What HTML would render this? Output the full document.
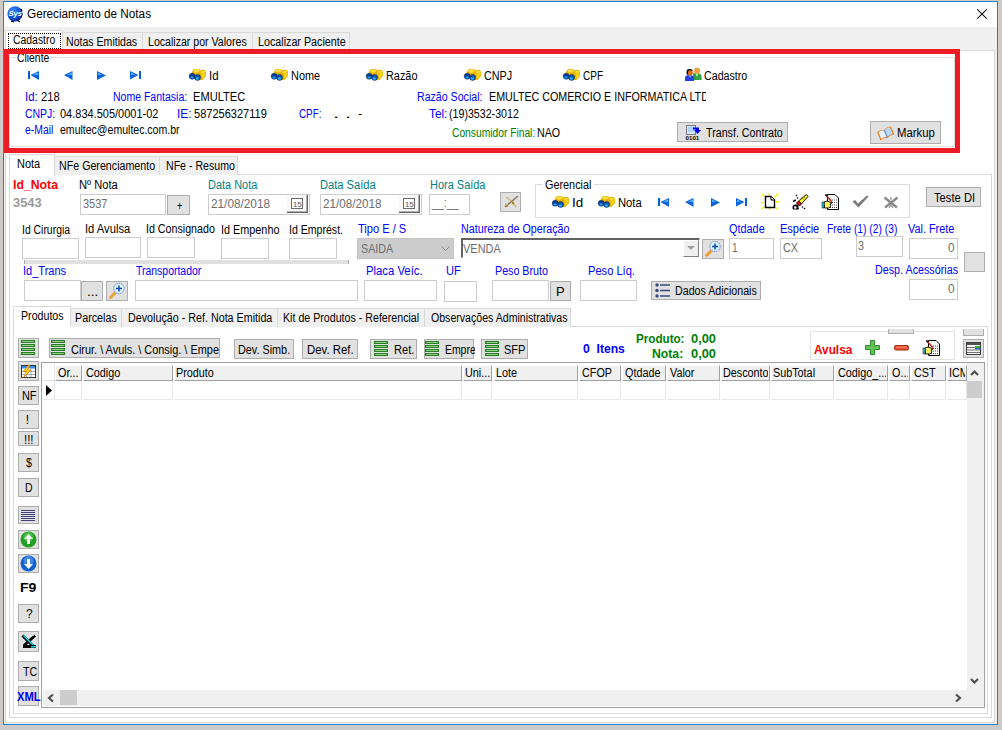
<!DOCTYPE html>
<html><head><meta charset="utf-8"><style>
*{box-sizing:border-box;margin:0;padding:0}
html,body{width:1002px;height:730px;overflow:hidden;background:#cbcbcb;position:relative;font-family:"Liberation Sans",sans-serif}
.t{position:absolute;white-space:nowrap;font-size:12px;line-height:14px;transform-origin:0 0}
.bx{position:absolute}
.in{position:absolute;background:#fff;border:1px solid #cccccc}
.btn{position:absolute;background:#e1e1e1;border:1px solid #adadad}
.tab{position:absolute;background:#f0f0f0;border:1px solid #d9d9d9;border-bottom:none}
.tabs{position:absolute;background:#fff;border:1px solid #d9d9d9;border-bottom:none}
.pg{position:absolute;background:#fff;border:1px solid #d9d9d9}
.gb{position:absolute;border:1px solid #dcdcdc}
.ln{position:absolute}
svg{position:absolute;overflow:visible}

</style></head><body>
<div class="bx" style="left:3px;top:1px;width:995px;height:724px;background:#f0f0f0;border:1px solid #1883d7;box-shadow:0 0 0 1px #d6cbc4"></div>
<div class="bx" style="left:4px;top:2px;width:993px;height:25px;background:#fff"></div>
<svg style="left:7px;top:5px" width="17" height="18" viewBox="0 0 17 18"><defs><radialGradient id="sg" cx=".35" cy=".3" r=".8"><stop offset="0" stop-color="#3a8cff"/><stop offset=".6" stop-color="#0c4fd0"/><stop offset="1" stop-color="#062a90"/></radialGradient></defs><circle cx="8" cy="8.8" r="7.6" fill="url(#sg)"/><path d="M14 4 L15 6 M15 9 L14 12 M10 15 L13 17 M4 16 L7 17" stroke="#000" stroke-width="1.2"/><text x="1.5" y="10.8" font-family="Liberation Sans" font-size="7.6" font-weight="bold" font-style="italic" fill="#fff">Sys</text></svg>
<div class="t" style="left:27.35px;top:7px;color:#000;font-size:12px;transform:scaleX(0.9786);">Gereciamento de Notas</div>
<svg style="left:977px;top:9px" width="10" height="10" viewBox="0 0 10 10"><path d="M0.3 0.3 L9.7 9.7 M9.7 0.3 L0.3 9.7" stroke="#111" stroke-width="1.1"/></svg>
<div class="pg" style="left:5px;top:50px;width:990px;height:673px;"></div>
<div class="tab" style="left:62px;top:32px;width:81px;height:18px;"></div>
<div class="t" style="left:66.22px;top:35px;color:#000;font-size:12px;transform:scaleX(0.8809);">Notas Emitidas</div>
<div class="tab" style="left:142px;top:32px;width:111px;height:18px;"></div>
<div class="t" style="left:148.22px;top:35px;color:#000;font-size:12px;transform:scaleX(0.8826);">Localizar por Valores</div>
<div class="tab" style="left:252px;top:32px;width:98px;height:18px;"></div>
<div class="t" style="left:257.71px;top:35px;color:#000;font-size:12px;transform:scaleX(0.8938);">Localizar Paciente</div>
<div class="tabs" style="left:5px;top:30px;width:58px;height:21px;border-bottom:none"></div>
<div class="bx" style="left:8px;top:33px;width:53px;height:16px;border:1px dotted #000"></div>
<div class="t" style="left:13.13px;top:33px;color:#000;font-size:12px;transform:scaleX(0.8674);">Cadastro</div>
<div class="gb" style="left:9px;top:57px;width:946px;height:90px;"></div>
<div class="bx" style="left:16px;top:52px;width:34px;height:10px;background:#fff"></div>
<div class="t" style="left:17.13px;top:51px;color:#000;font-size:12px;transform:scaleX(0.8644);">Cliente</div>
<svg style="left:28px;top:71px" width="12" height="9" viewBox="0 0 12 9"><rect x="0" y="0" width="2" height="8" fill="#0a5fd8"/><path d="M2.5 4 L11 0 L11 9 Z" fill="#0a64dc"/><path d="M5 3.5 L10 1.5 L10 4Z" fill="#5ab0ff"/></svg>
<svg style="left:64px;top:71px" width="12" height="9" viewBox="0 0 12 9"><path d="M0 4 L8.5 0 L8.5 9 Z" fill="#0a64dc"/><path d="M3 3.5 L8 1.5 L8 4Z" fill="#5ab0ff"/></svg>
<svg style="left:97px;top:71px" width="12" height="9" viewBox="0 0 12 9"><path d="M0 0 L9 4.5 L0 9 Z" fill="#0a64dc"/><path d="M1 1.5 L5 3.5 L1 4Z" fill="#5ab0ff"/></svg>
<svg style="left:130px;top:71px" width="12" height="9" viewBox="0 0 12 9"><path d="M0 0 L8.5 4 L0 8.5 Z" fill="#0a64dc"/><path d="M1 1.5 L5 3.5 L1 4Z" fill="#5ab0ff"/><rect x="9" y="0" width="2" height="8" fill="#0a5fd8"/></svg>
<svg style="left:189px;top:68px" width="17" height="13" viewBox="0 0 17 13"><path d="M2.5 4.5 L5 1 L10 1 L11.5 2.5 L12.5 2 L16 2 L17 4 L17 8 L13.5 12 L8 12 L3 8 Z" fill="#e8b400"/><path d="M4.5 3 L5.8 1.6 L9.6 1.6 L10.6 3.2 L8 4.6 L5.5 4.6Z" fill="#ffe24a"/><path d="M11 4.5 L13 3 L16.3 3 L15 5Z" fill="#ffe24a"/><path d="M12.5 6 L16.3 4.5 L16.3 7.6 L13.2 11Z" fill="#ffd21a"/><circle cx="3.2" cy="8.3" r="3" fill="#083c90" stroke="#052a68" stroke-width=".5"/><circle cx="8.6" cy="9.4" r="3" fill="#0850a8" stroke="#052a68" stroke-width=".5"/><ellipse cx="3" cy="9.4" rx="1.6" ry="1.2" fill="#1c9cf4"/><ellipse cx="8.4" cy="10.5" rx="1.6" ry="1.2" fill="#22b2ff"/></svg>
<div class="t" style="left:209.10px;top:69px;color:#000;font-size:12px;transform:scaleX(0.9614);">Id</div>
<svg style="left:271px;top:68px" width="17" height="13" viewBox="0 0 17 13"><path d="M2.5 4.5 L5 1 L10 1 L11.5 2.5 L12.5 2 L16 2 L17 4 L17 8 L13.5 12 L8 12 L3 8 Z" fill="#e8b400"/><path d="M4.5 3 L5.8 1.6 L9.6 1.6 L10.6 3.2 L8 4.6 L5.5 4.6Z" fill="#ffe24a"/><path d="M11 4.5 L13 3 L16.3 3 L15 5Z" fill="#ffe24a"/><path d="M12.5 6 L16.3 4.5 L16.3 7.6 L13.2 11Z" fill="#ffd21a"/><circle cx="3.2" cy="8.3" r="3" fill="#083c90" stroke="#052a68" stroke-width=".5"/><circle cx="8.6" cy="9.4" r="3" fill="#0850a8" stroke="#052a68" stroke-width=".5"/><ellipse cx="3" cy="9.4" rx="1.6" ry="1.2" fill="#1c9cf4"/><ellipse cx="8.4" cy="10.5" rx="1.6" ry="1.2" fill="#22b2ff"/></svg>
<div class="t" style="left:290.79px;top:69px;color:#000;font-size:12px;transform:scaleX(0.9098);">Nome</div>
<svg style="left:366px;top:68px" width="17" height="13" viewBox="0 0 17 13"><path d="M2.5 4.5 L5 1 L10 1 L11.5 2.5 L12.5 2 L16 2 L17 4 L17 8 L13.5 12 L8 12 L3 8 Z" fill="#e8b400"/><path d="M4.5 3 L5.8 1.6 L9.6 1.6 L10.6 3.2 L8 4.6 L5.5 4.6Z" fill="#ffe24a"/><path d="M11 4.5 L13 3 L16.3 3 L15 5Z" fill="#ffe24a"/><path d="M12.5 6 L16.3 4.5 L16.3 7.6 L13.2 11Z" fill="#ffd21a"/><circle cx="3.2" cy="8.3" r="3" fill="#083c90" stroke="#052a68" stroke-width=".5"/><circle cx="8.6" cy="9.4" r="3" fill="#0850a8" stroke="#052a68" stroke-width=".5"/><ellipse cx="3" cy="9.4" rx="1.6" ry="1.2" fill="#1c9cf4"/><ellipse cx="8.4" cy="10.5" rx="1.6" ry="1.2" fill="#22b2ff"/></svg>
<div class="t" style="left:385.90px;top:69px;color:#000;font-size:12px;transform:scaleX(0.9075);">Razão</div>
<svg style="left:464px;top:68px" width="17" height="13" viewBox="0 0 17 13"><path d="M2.5 4.5 L5 1 L10 1 L11.5 2.5 L12.5 2 L16 2 L17 4 L17 8 L13.5 12 L8 12 L3 8 Z" fill="#e8b400"/><path d="M4.5 3 L5.8 1.6 L9.6 1.6 L10.6 3.2 L8 4.6 L5.5 4.6Z" fill="#ffe24a"/><path d="M11 4.5 L13 3 L16.3 3 L15 5Z" fill="#ffe24a"/><path d="M12.5 6 L16.3 4.5 L16.3 7.6 L13.2 11Z" fill="#ffd21a"/><circle cx="3.2" cy="8.3" r="3" fill="#083c90" stroke="#052a68" stroke-width=".5"/><circle cx="8.6" cy="9.4" r="3" fill="#0850a8" stroke="#052a68" stroke-width=".5"/><ellipse cx="3" cy="9.4" rx="1.6" ry="1.2" fill="#1c9cf4"/><ellipse cx="8.4" cy="10.5" rx="1.6" ry="1.2" fill="#22b2ff"/></svg>
<div class="t" style="left:483.91px;top:69px;color:#000;font-size:12px;transform:scaleX(0.8962);">CNPJ</div>
<svg style="left:563px;top:68px" width="17" height="13" viewBox="0 0 17 13"><path d="M2.5 4.5 L5 1 L10 1 L11.5 2.5 L12.5 2 L16 2 L17 4 L17 8 L13.5 12 L8 12 L3 8 Z" fill="#e8b400"/><path d="M4.5 3 L5.8 1.6 L9.6 1.6 L10.6 3.2 L8 4.6 L5.5 4.6Z" fill="#ffe24a"/><path d="M11 4.5 L13 3 L16.3 3 L15 5Z" fill="#ffe24a"/><path d="M12.5 6 L16.3 4.5 L16.3 7.6 L13.2 11Z" fill="#ffd21a"/><circle cx="3.2" cy="8.3" r="3" fill="#083c90" stroke="#052a68" stroke-width=".5"/><circle cx="8.6" cy="9.4" r="3" fill="#0850a8" stroke="#052a68" stroke-width=".5"/><ellipse cx="3" cy="9.4" rx="1.6" ry="1.2" fill="#1c9cf4"/><ellipse cx="8.4" cy="10.5" rx="1.6" ry="1.2" fill="#22b2ff"/></svg>
<div class="t" style="left:583.05px;top:69px;color:#000;font-size:12px;transform:scaleX(0.8346);">CPF</div>
<svg style="left:685px;top:67px" width="17" height="15" viewBox="0 0 17 15"><path d="M8 7 Q8 6 11.5 6 Q16.5 6 16.5 9.5 L16.5 13 L8 13Z" fill="#2fa040"/><path d="M11 7 L12 10 L13 7Z" fill="#dff"/><circle cx="12" cy="4" r="3" fill="#f8a040"/><path d="M9 3 Q10 0 12.5 0.5 Q15.5 1 15 4 L14 3 Q12 1 9 3Z" fill="#d8a850"/><path d="M0 14 L0 11 Q0 8 4 8 Q9 8 9 11 L9 14Z" fill="#2040e0"/><path d="M4 8.5 L5 11 L6 8.5Z" fill="#9cf"/><circle cx="5" cy="5.5" r="2.9" fill="#e06a18"/><path d="M1.5 7 Q1 2 4 2 Q7.5 1.5 8 4 L5 3.2 L3 4.5 L3 8Z" fill="#111"/></svg>
<div class="t" style="left:704.41px;top:69px;color:#000;font-size:12px;transform:scaleX(0.8884);">Cadastro</div>
<div class="t" style="left:24.72px;top:90px;color:#0000ff;font-size:12px;transform:scaleX(0.9474);">Id:</div>
<div class="t" style="left:41.09px;top:90px;color:#000;font-size:12px;transform:scaleX(0.9366);">218</div>
<div class="t" style="left:112.82px;top:90px;color:#0000ff;font-size:12px;transform:scaleX(0.8756);">Nome Fantasia:</div>
<div class="t" style="left:192.58px;top:90px;color:#000;font-size:12px;transform:scaleX(0.9253);">EMULTEC</div>
<div class="t" style="left:416.92px;top:90px;color:#0000ff;font-size:12px;transform:scaleX(0.8842);">Razão Social:</div>
<div class="bx" style="left:480px;top:88px;width:226px;height:16px;overflow:hidden">
<div class="t" style="left:8.71px;top:2px;color:#000;font-size:12px;transform:scaleX(0.8913);">EMULTEC COMERCIO E INFORMATICA LTDA</div>
</div>
<div class="t" style="left:25.13px;top:107px;color:#0000ff;font-size:12px;transform:scaleX(0.8721);">CNPJ:</div>
<div class="t" style="left:60.11px;top:107px;color:#000;font-size:12px;transform:scaleX(0.9162);">04.834.505/0001-02</div>
<div class="t" style="left:176.78px;top:107px;color:#0000ff;font-size:12px;transform:scaleX(0.9893);">IE:</div>
<div class="t" style="left:193.53px;top:107px;color:#000;font-size:12px;transform:scaleX(0.9191);">587256327119</div>
<div class="t" style="left:298.96px;top:107px;color:#0000ff;font-size:12px;transform:scaleX(0.8179);">CPF:</div>
<div class="t" style="left:332.69px;top:107px;color:#000;font-size:12px;transform:scaleX(1.8478);">.</div>
<div class="t" style="left:344.69px;top:107px;color:#000;font-size:12px;transform:scaleX(1.8478);">.</div>
<div class="t" style="left:357.98px;top:107px;color:#000;font-size:12px;transform:scaleX(1.0324);">-</div>
<div class="t" style="left:428.68px;top:107px;color:#0000ff;font-size:12px;transform:scaleX(0.9859);">Tel:</div>
<div class="t" style="left:448.92px;top:107px;color:#000;font-size:12px;transform:scaleX(0.8871);">(19)3532-3012</div>
<div class="t" style="left:25.20px;top:123px;color:#0000ff;font-size:12px;transform:scaleX(0.8660);">e-Mail</div>
<div class="t" style="left:60.09px;top:123px;color:#000;font-size:12px;transform:scaleX(0.8775);">emultec@emultec.com.br</div>
<div class="t" style="left:452.04px;top:126px;color:#008000;font-size:12px;transform:scaleX(0.8550);">Consumidor Final:</div>
<div class="t" style="left:537.21px;top:126px;color:#000;font-size:12px;transform:scaleX(0.8909);">NAO</div>
<div class="btn" style="left:677px;top:122px;width:111px;height:20px;"></div>
<svg style="left:685px;top:125px" width="17" height="16" viewBox="0 0 17 16"><rect x="1.5" y="0.5" width="9" height="9" fill="#cfe6ff" stroke="#7a7a8a"/><path d="M3 3 H9 M3 5.5 H9" stroke="#9cc8f8" stroke-width="1.5"/><path d="M8 2.5 L14 2.5 L14 5 L16 5 L12.5 9 L9 5 L11 5 L11 4.5 L8 4.5Z" fill="#0000f0"/><text x="0.5" y="15" font-family="Liberation Sans" font-size="6.2" font-weight="bold" fill="#000">0101</text></svg>
<div class="t" style="left:705.71px;top:126px;color:#000;font-size:12px;transform:scaleX(0.8904);">Transf. Contrato</div>
<div class="btn" style="left:870px;top:121px;width:71px;height:23px;"></div>
<svg style="left:877px;top:126px" width="17" height="14" viewBox="0 0 17 14"><g transform="rotate(-22 8.5 7)"><path d="M1 3 Q4.5 1.5 8.5 3.5 Q12.5 1.5 16 3 L16 12 Q12.5 10.5 8.5 12.5 Q4.5 10.5 1 12Z" fill="#f08020"/><path d="M2.3 3.3 Q5 2.5 8.3 4 L8.3 11.3 Q5 10 2.3 10.8Z" fill="#e8f2ff"/><path d="M8.7 4 Q12 2.5 14.7 3.3 L14.7 10.8 Q12 10 8.7 11.3Z" fill="#b8d8f8"/><path d="M8.5 4 V12" stroke="#4a8ad8" stroke-width="1"/></g></svg>
<div class="t" style="left:897.16px;top:126px;color:#000;font-size:12px;transform:scaleX(0.9459);">Markup</div>
<div class="bx" style="left:4px;top:49px;width:956px;height:104px;border:5px solid #ed1c24"></div>
<div class="pg" style="left:9px;top:174px;width:983px;height:544px;"></div>
<div class="tab" style="left:54px;top:156px;width:106px;height:19px;"></div>
<div class="t" style="left:58.61px;top:159px;color:#000;font-size:12px;transform:scaleX(0.8894);">NFe Gerenciamento</div>
<div class="tab" style="left:159px;top:156px;width:79px;height:19px;"></div>
<div class="t" style="left:165.62px;top:159px;color:#000;font-size:12px;transform:scaleX(0.8826);">NFe - Resumo</div>
<div class="tabs" style="left:9px;top:154px;width:46px;height:22px;"></div>
<div class="t" style="left:16.89px;top:157px;color:#000;font-size:12px;transform:scaleX(0.9117);">Nota</div>
<div class="t" style="left:12.91px;top:178px;color:#ff0000;font-size:12px;font-weight:bold;transform:scaleX(1.0235);">Id_Nota</div>
<div class="t" style="left:79.48px;top:178px;color:#000;font-size:12px;transform:scaleX(0.9276);">Nº Nota</div>
<div class="t" style="left:13.02px;top:196px;color:#9a9a9a;font-size:12px;font-weight:bold;transform:scaleX(1.0704);">3543</div>
<div class="in" style="left:80px;top:194px;width:86px;height:21px;"></div>
<div class="t" style="left:83.07px;top:197px;color:#6d6d6d;font-size:12px;transform:scaleX(0.9127);">3537</div>
<div class="btn" style="left:167px;top:195px;width:23px;height:20px;"></div>
<div class="t" style="left:177.02px;top:199px;color:#000;font-size:12px;transform:scaleX(0.7660);">+</div>
<div class="t" style="left:207.99px;top:178px;color:#008080;font-size:12px;transform:scaleX(0.9124);">Data Nota</div>
<div class="in" style="left:208px;top:194px;width:102px;height:21px;"></div>
<div class="t" style="left:211.36px;top:197px;color:#6d6d6d;font-size:12px;transform:scaleX(0.9831);">21/08/2018</div>
<div class="bx" style="left:287px;top:195px;width:21px;height:18px;background:#f8f8f8;border-right:1px solid #646464;border-bottom:1px solid #646464;box-shadow:inset -1px -1px 0 #b0b0b0"></div>
<svg style="left:291px;top:198px" width="12" height="11" viewBox="0 0 12 11"><rect x="0.5" y="0.5" width="11" height="10" fill="#fff" stroke="#6a6a6a"/><text x="1.6" y="8.6" font-family="Liberation Sans" font-size="7.8" fill="#606060" transform="scale(1.05,1)">15</text></svg>
<div class="t" style="left:319.98px;top:178px;color:#008080;font-size:12px;transform:scaleX(0.9264);">Data Saída</div>
<div class="in" style="left:320px;top:194px;width:102px;height:21px;"></div>
<div class="t" style="left:323.37px;top:197px;color:#6d6d6d;font-size:12px;transform:scaleX(0.9746);">21/08/2018</div>
<div class="bx" style="left:399px;top:195px;width:21px;height:18px;background:#f8f8f8;border-right:1px solid #646464;border-bottom:1px solid #646464;box-shadow:inset -1px -1px 0 #b0b0b0"></div>
<svg style="left:403px;top:198px" width="12" height="11" viewBox="0 0 12 11"><rect x="0.5" y="0.5" width="11" height="10" fill="#fff" stroke="#6a6a6a"/><text x="1.6" y="8.6" font-family="Liberation Sans" font-size="7.8" fill="#606060" transform="scale(1.05,1)">15</text></svg>
<div class="t" style="left:429.69px;top:178px;color:#008080;font-size:12px;transform:scaleX(0.9138);">Hora Saída</div>
<div class="in" style="left:429px;top:194px;width:41px;height:21px;"></div>
<div class="t" style="left:432.15px;top:196px;color:#6d6d6d;font-size:12px;transform:scaleX(0.8896);">__:__</div>
<div class="btn" style="left:500px;top:192px;width:21px;height:20px;"></div>
<svg style="left:503px;top:195px" width="16" height="14" viewBox="0 0 16 14"><path d="M2 12 L15 1" stroke="#8a7a50" stroke-width="1.6"/><path d="M3 2 L8 6 M10 8 L13 12 M2 9 L5 10" stroke="#c8a860" stroke-width="1.4" opacity=".8"/><circle cx="10" cy="8" r="1.2" fill="#b08020"/><circle cx="4" cy="11" r="1" fill="#b08020"/></svg>
<div class="gb" style="left:535px;top:184px;width:375px;height:34px;"></div>
<div class="bx" style="left:543px;top:178px;width:51px;height:12px;background:#fff"></div>
<div class="t" style="left:545.40px;top:178px;color:#000;font-size:12px;transform:scaleX(0.9034);">Gerencial</div>
<svg style="left:552px;top:195px" width="17" height="13" viewBox="0 0 17 13"><path d="M2.5 4.5 L5 1 L10 1 L11.5 2.5 L12.5 2 L16 2 L17 4 L17 8 L13.5 12 L8 12 L3 8 Z" fill="#e8b400"/><path d="M4.5 3 L5.8 1.6 L9.6 1.6 L10.6 3.2 L8 4.6 L5.5 4.6Z" fill="#ffe24a"/><path d="M11 4.5 L13 3 L16.3 3 L15 5Z" fill="#ffe24a"/><path d="M12.5 6 L16.3 4.5 L16.3 7.6 L13.2 11Z" fill="#ffd21a"/><circle cx="3.2" cy="8.3" r="3" fill="#083c90" stroke="#052a68" stroke-width=".5"/><circle cx="8.6" cy="9.4" r="3" fill="#0850a8" stroke="#052a68" stroke-width=".5"/><ellipse cx="3" cy="9.4" rx="1.6" ry="1.2" fill="#1c9cf4"/><ellipse cx="8.4" cy="10.5" rx="1.6" ry="1.2" fill="#22b2ff"/></svg>
<div class="t" style="left:571.96px;top:196px;color:#000;font-size:12px;transform:scaleX(1.1176);">Id</div>
<svg style="left:598px;top:195px" width="17" height="13" viewBox="0 0 17 13"><path d="M2.5 4.5 L5 1 L10 1 L11.5 2.5 L12.5 2 L16 2 L17 4 L17 8 L13.5 12 L8 12 L3 8 Z" fill="#e8b400"/><path d="M4.5 3 L5.8 1.6 L9.6 1.6 L10.6 3.2 L8 4.6 L5.5 4.6Z" fill="#ffe24a"/><path d="M11 4.5 L13 3 L16.3 3 L15 5Z" fill="#ffe24a"/><path d="M12.5 6 L16.3 4.5 L16.3 7.6 L13.2 11Z" fill="#ffd21a"/><circle cx="3.2" cy="8.3" r="3" fill="#083c90" stroke="#052a68" stroke-width=".5"/><circle cx="8.6" cy="9.4" r="3" fill="#0850a8" stroke="#052a68" stroke-width=".5"/><ellipse cx="3" cy="9.4" rx="1.6" ry="1.2" fill="#1c9cf4"/><ellipse cx="8.4" cy="10.5" rx="1.6" ry="1.2" fill="#22b2ff"/></svg>
<div class="t" style="left:617.67px;top:196px;color:#000;font-size:12px;transform:scaleX(0.9363);">Nota</div>
<svg style="left:658px;top:198px" width="12" height="9" viewBox="0 0 12 9"><rect x="0" y="0" width="2" height="8" fill="#0a5fd8"/><path d="M2.5 4 L11 0 L11 9 Z" fill="#0a64dc"/><path d="M5 3.5 L10 1.5 L10 4Z" fill="#5ab0ff"/></svg>
<svg style="left:685px;top:198px" width="12" height="9" viewBox="0 0 12 9"><path d="M0 4 L8.5 0 L8.5 9 Z" fill="#0a64dc"/><path d="M3 3.5 L8 1.5 L8 4Z" fill="#5ab0ff"/></svg>
<svg style="left:711px;top:198px" width="12" height="9" viewBox="0 0 12 9"><path d="M0 0 L9 4.5 L0 9 Z" fill="#0a64dc"/><path d="M1 1.5 L5 3.5 L1 4Z" fill="#5ab0ff"/></svg>
<svg style="left:736px;top:198px" width="12" height="9" viewBox="0 0 12 9"><path d="M0 0 L8.5 4 L0 8.5 Z" fill="#0a64dc"/><path d="M1 1.5 L5 3.5 L1 4Z" fill="#5ab0ff"/><rect x="9" y="0" width="2" height="8" fill="#0a5fd8"/></svg>
<svg style="left:761px;top:193px" width="18" height="17" viewBox="0 0 18 17"><path d="M1 1 L3.5 3.5 M8.3 0 V2.5 M17.5 0.5 L13.5 4.5 M0 9.5 H3 M15 9 H18 M0.5 16 L3.5 13.5 M8.5 14.5 V17 M14 14 L17 16.5" stroke="#f8f000" stroke-width="1.5"/><path d="M4.5 3.5 H10 L13.5 7 V14.5 H4.5Z" fill="#fff" stroke="#000" stroke-width="1.4"/><path d="M10 3.5 V7 H13.5" fill="#e8e8e8" stroke="#000" stroke-width="1"/></svg>
<svg style="left:792px;top:194px" width="16" height="16" viewBox="0 0 16 16"><path d="M14.5 0.5 L16 2.5 L9.5 10 L6.5 7Z" fill="#f8f020" stroke="#000" stroke-width=".9"/><path d="M9 3 L12 6 M10.5 1.5 L13.5 4.5" stroke="#806000" stroke-width=".5"/><path d="M6.5 7 L9.5 10 L7.5 12 L4.5 9Z" fill="#f01010" stroke="#000" stroke-width=".9"/><path d="M0.5 14.5 Q0 11 3 10.5 L6 10.5 L7 15.5 L1.5 15.5Z" fill="#000"/><circle cx="3.3" cy="13.5" r="1.3" fill="#fff"/><path d="M1.5 8 Q2 6 4 6.5" stroke="#000" stroke-width="1.6" fill="none"/><circle cx="4.5" cy="1.5" r=".8" fill="#000"/><circle cx="5.5" cy="4" r=".8" fill="#000"/><circle cx="10.5" cy="13" r=".8" fill="#000"/><circle cx="12.5" cy="14.5" r=".8" fill="#000"/></svg>
<svg style="left:822px;top:194px" width="17" height="16" viewBox="0 0 17 16"><path d="M5.5 0.5 H13 L16.5 4 V15.5 H5.5Z" fill="#fff" stroke="#000"/><path d="M8 6 H15 M8 8.5 H15 M8 11 H15 M8 13.5 H15" stroke="#000" stroke-width=".7" stroke-dasharray="1 1"/><path d="M2 8 L5 7 L8 8 L10 9 L8 10 L9 12 L7 14 L2.5 14Z" fill="#f8f060" stroke="#000" stroke-width=".9"/><rect x="0" y="8" width="2" height="6" fill="#30d0f0" stroke="#000" stroke-width=".5"/><path d="M3.5 0.5 L10 8" stroke="#d02020" stroke-width="1.4"/><path d="M3.5 0.5 L5 2.3" stroke="#000" stroke-width="1.4"/></svg>
<svg style="left:852px;top:195px" width="17" height="13" viewBox="0 0 17 13"><path d="M0.5 6.5 L3 5 L6 8.5 L15 0.5 L16.5 1.5 L6.5 12.5Z" fill="#7a7a7a"/></svg>
<svg style="left:884px;top:197px" width="14" height="11" viewBox="0 0 14 11"><path d="M0.5 0.5 L13 10.5 M13.5 0.5 L1 10.5" stroke="#8a8a8a" stroke-width="2.4"/><path d="M7 0 V3 M5 11 L7 8 L9 11" stroke="#8a8a8a" stroke-width="1.2" fill="none"/></svg>
<div class="btn" style="left:926px;top:187px;width:55px;height:20px;"></div>
<div class="t" style="left:933.70px;top:191px;color:#000;font-size:12px;transform:scaleX(0.9339);">Teste DI</div>
<div class="t" style="left:22.39px;top:223px;color:#000;font-size:12px;transform:scaleX(0.8675);">Id Cirurgia</div>
<div class="t" style="left:85.13px;top:222px;color:#000;font-size:12px;transform:scaleX(0.9323);">Id Avulsa</div>
<div class="t" style="left:146.37px;top:222px;color:#000;font-size:12px;transform:scaleX(0.8900);">Id Consignado</div>
<div class="t" style="left:221.16px;top:223px;color:#000;font-size:12px;transform:scaleX(0.9030);">Id Empenho</div>
<div class="t" style="left:289.18px;top:223px;color:#000;font-size:12px;transform:scaleX(0.8805);">Id Emprést.</div>
<div class="t" style="left:357.50px;top:222px;color:#0000ff;font-size:12px;transform:scaleX(0.9227);">Tipo E / S</div>
<div class="t" style="left:460.81px;top:222px;color:#0000ff;font-size:12px;transform:scaleX(0.8933);">Natureza de Operação</div>
<div class="t" style="left:728.75px;top:222px;color:#0000ff;font-size:12px;transform:scaleX(0.9066);">Qtdade</div>
<div class="t" style="left:779.69px;top:222px;color:#0000ff;font-size:12px;transform:scaleX(0.9187);">Espécie</div>
<div class="t" style="left:826.74px;top:222px;color:#0000ff;font-size:12px;transform:scaleX(0.8578);">Frete (1) (2) (3)</div>
<div class="t" style="left:908.31px;top:222px;color:#0000ff;font-size:12px;transform:scaleX(0.9058);">Val. Frete</div>
<div class="in" style="left:22px;top:238px;width:57px;height:21px;"></div>
<div class="in" style="left:85px;top:237px;width:56px;height:21px;"></div>
<div class="in" style="left:147px;top:237px;width:48px;height:21px;"></div>
<div class="in" style="left:221px;top:238px;width:48px;height:21px;"></div>
<div class="in" style="left:289px;top:238px;width:48px;height:21px;"></div>
<div class="bx" style="left:24px;top:260px;width:325px;height:4px;background:#e0e0e0;border-left:1px solid #a8a8a8;border-right:1px solid #a8a8a8"></div>
<div class="bx" style="left:357px;top:238px;width:97px;height:21px;background:#cccccc;border:1px solid #c4c4c4"></div>
<div class="t" style="left:360.79px;top:242px;color:#6d6d6d;font-size:12px;transform:scaleX(0.8927);">SAIDA</div>
<svg style="left:441px;top:246px" width="9" height="5" viewBox="0 0 9 5"><path d="M0.5 0.5 L4.5 4.5 L8.5 0.5" fill="none" stroke="#8a8a8a" stroke-width="1"/></svg>
<div class="in" style="left:461px;top:238px;width:239px;height:20px;border-color:#646464 #fff #fff #646464;border-width:2px 1px 1px 2px"></div>
<div class="t" style="left:463.40px;top:242px;color:#6d6d6d;font-size:12px;transform:scaleX(0.9148);">VENDA</div>
<div class="btn" style="left:683px;top:240px;width:16px;height:17px;background:#f0f0f0;border-color:#fff #808080 #808080 #fff"></div>
<svg style="left:687px;top:246px" width="8" height="4" viewBox="0 0 8 4"><path d="M0 0 H8 L4 4Z" fill="#a0a0a0"/></svg>
<div class="btn" style="left:702px;top:239px;width:22px;height:20px;"></div>
<svg style="left:704px;top:240px" width="18" height="18" viewBox="0 0 18 18"><path d="M2.5 15.5 L7 11" stroke="#f0a030" stroke-width="3" stroke-linecap="round"/><circle cx="11" cy="6.5" r="5.2" fill="#d8f4ff" stroke="#6a70c8" stroke-width="1" stroke-dasharray="1.2 .8"/><path d="M11 3.5 V9.5 M8 6.5 H14" stroke="#1048b0" stroke-width="1.5"/></svg>
<div class="in" style="left:729px;top:238px;width:45px;height:21px;"></div>
<div class="t" style="left:731.98px;top:241px;color:#6d6d6d;font-size:12px;transform:scaleX(0.8500);">1</div>
<div class="in" style="left:780px;top:238px;width:42px;height:21px;"></div>
<div class="t" style="left:782.71px;top:241px;color:#6d6d6d;font-size:12px;transform:scaleX(0.9007);">CX</div>
<div class="in" style="left:856px;top:236px;width:47px;height:21px;"></div>
<div class="t" style="left:858.38px;top:239px;color:#6d6d6d;font-size:12px;transform:scaleX(0.8992);">3</div>
<div class="in" style="left:909px;top:238px;width:49px;height:21px;"></div>
<div class="t" style="left:947.97px;top:241px;color:#6d6d6d;font-size:12px;transform:scaleX(0.9894);">0</div>
<div class="btn" style="left:964px;top:252px;width:21px;height:20px;"></div>
<div class="t" style="left:23.34px;top:264px;color:#0000ff;font-size:12px;transform:scaleX(0.9181);">Id_Trans</div>
<div class="t" style="left:135.72px;top:264px;color:#0000ff;font-size:12px;transform:scaleX(0.8706);">Transportador</div>
<div class="t" style="left:365.66px;top:264px;color:#0000ff;font-size:12px;transform:scaleX(0.9422);">Placa Veíc.</div>
<div class="t" style="left:445.51px;top:264px;color:#0000ff;font-size:12px;transform:scaleX(0.9249);">UF</div>
<div class="t" style="left:494.71px;top:264px;color:#0000ff;font-size:12px;transform:scaleX(0.8913);">Peso Bruto</div>
<div class="t" style="left:587.68px;top:264px;color:#0000ff;font-size:12px;transform:scaleX(0.9250);">Peso Líq.</div>
<div class="t" style="left:874.61px;top:263px;color:#0000ff;font-size:12px;transform:scaleX(0.8954);">Desp. Acessórias</div>
<div class="in" style="left:24px;top:280px;width:57px;height:21px;"></div>
<div class="btn" style="left:81px;top:281px;width:22px;height:20px;"></div>
<div class="t" style="left:86.58px;top:285px;color:#000;font-size:12px;transform:scaleX(1.1384);">...</div>
<div class="btn" style="left:106px;top:281px;width:22px;height:20px;"></div>
<svg style="left:108px;top:282px" width="18" height="18" viewBox="0 0 18 18"><path d="M2.5 15.5 L7 11" stroke="#f0a030" stroke-width="3" stroke-linecap="round"/><circle cx="11" cy="6.5" r="5.2" fill="#d8f4ff" stroke="#6a70c8" stroke-width="1" stroke-dasharray="1.2 .8"/><path d="M11 3.5 V9.5 M8 6.5 H14" stroke="#1048b0" stroke-width="1.5"/></svg>
<div class="in" style="left:135px;top:280px;width:223px;height:21px;"></div>
<div class="in" style="left:364px;top:280px;width:73px;height:21px;"></div>
<div class="in" style="left:444px;top:281px;width:33px;height:21px;"></div>
<div class="in" style="left:492px;top:280px;width:57px;height:21px;"></div>
<div class="btn" style="left:550px;top:281px;width:21px;height:20px;"></div>
<div class="t" style="left:556.05px;top:285px;color:#000;font-size:12px;transform:scaleX(1.0759);">P</div>
<div class="in" style="left:580px;top:280px;width:57px;height:21px;"></div>
<div class="btn" style="left:651px;top:281px;width:110px;height:19px;"></div>
<svg style="left:655px;top:283px" width="16" height="15" viewBox="0 0 16 15"><circle cx="2" cy="2" r="1.7" fill="#3a4a80"/><circle cx="2" cy="7.5" r="1.7" fill="#3a4a80"/><circle cx="2" cy="13" r="1.7" fill="#3a4a80"/><path d="M5 2 H15 M5 7.5 H15 M5 13 H15" stroke="#3a4a80" stroke-width="1.3"/></svg>
<div class="t" style="left:674.61px;top:284px;color:#000;font-size:12px;transform:scaleX(0.8888);">Dados Adicionais</div>
<div class="in" style="left:909px;top:279px;width:49px;height:21px;"></div>
<div class="t" style="left:947.97px;top:282px;color:#6d6d6d;font-size:12px;transform:scaleX(0.9894);">0</div>
<div class="pg" style="left:13px;top:326px;width:975px;height:388px;"></div>
<div class="tab" style="left:70px;top:308px;width:52px;height:19px;"></div>
<div class="t" style="left:74.51px;top:311px;color:#000;font-size:12px;transform:scaleX(0.8952);">Parcelas</div>
<div class="tab" style="left:121px;top:308px;width:157px;height:19px;"></div>
<div class="t" style="left:127.71px;top:311px;color:#000;font-size:12px;transform:scaleX(0.8943);">Devolução - Ref. Nota Emitida</div>
<div class="tab" style="left:277px;top:308px;width:148px;height:19px;"></div>
<div class="t" style="left:283.21px;top:311px;color:#000;font-size:12px;transform:scaleX(0.8873);">Kit de Produtos - Referencial</div>
<div class="tab" style="left:424px;top:308px;width:147px;height:19px;"></div>
<div class="t" style="left:430.86px;top:311px;color:#000;font-size:12px;transform:scaleX(0.8820);">Observações Administrativas</div>
<div class="tabs" style="left:13px;top:306px;width:58px;height:21px;height:21px"></div>
<div class="t" style="left:20.91px;top:309px;color:#000;font-size:12px;transform:scaleX(0.8868);">Produtos</div>
<div class="btn" style="left:18px;top:338px;width:21px;height:20px;"></div>
<svg style="left:21px;top:340px" width="14" height="15" viewBox="0 0 14 15"><rect x="0.5" y="0.5" width="13" height="2" fill="#4aa84a" stroke="#2c7a2c" stroke-width="1"/><path d="M1.5 1.5 H12.5" stroke="#8ad87a" stroke-width="1"/><rect x="0.5" y="4.5" width="13" height="2" fill="#4aa84a" stroke="#2c7a2c" stroke-width="1"/><path d="M1.5 5.5 H12.5" stroke="#8ad87a" stroke-width="1"/><rect x="0.5" y="8.5" width="13" height="2" fill="#4aa84a" stroke="#2c7a2c" stroke-width="1"/><path d="M1.5 9.5 H12.5" stroke="#8ad87a" stroke-width="1"/><rect x="0.5" y="12.5" width="13" height="2" fill="#4aa84a" stroke="#2c7a2c" stroke-width="1"/><path d="M1.5 13.5 H12.5" stroke="#8ad87a" stroke-width="1"/></svg>
<div class="btn" style="left:49px;top:338px;width:171px;height:20px;"></div>
<svg style="left:51px;top:340px" width="14" height="15" viewBox="0 0 14 15"><rect x="0.5" y="0.5" width="13" height="2" fill="#4aa84a" stroke="#2c7a2c" stroke-width="1"/><path d="M1.5 1.5 H12.5" stroke="#8ad87a" stroke-width="1"/><rect x="0.5" y="4.5" width="13" height="2" fill="#4aa84a" stroke="#2c7a2c" stroke-width="1"/><path d="M1.5 5.5 H12.5" stroke="#8ad87a" stroke-width="1"/><rect x="0.5" y="8.5" width="13" height="2" fill="#4aa84a" stroke="#2c7a2c" stroke-width="1"/><path d="M1.5 9.5 H12.5" stroke="#8ad87a" stroke-width="1"/><rect x="0.5" y="12.5" width="13" height="2" fill="#4aa84a" stroke="#2c7a2c" stroke-width="1"/><path d="M1.5 13.5 H12.5" stroke="#8ad87a" stroke-width="1"/></svg>
<div class="bx" style="left:50px;top:339px;width:169px;height:18px;overflow:hidden">
<div class="t" style="left:21.00px;top:4px;color:#000;font-size:12px;transform:scaleX(0.9105);">Cirur. \ Avuls. \ Consig. \ Empenho</div>
</div>
<div class="btn" style="left:234px;top:339px;width:60px;height:20px;"></div>
<div class="t" style="left:238.20px;top:343px;color:#000;font-size:12px;transform:scaleX(0.9025);">Dev. Simb.</div>
<div class="btn" style="left:302px;top:339px;width:56px;height:20px;"></div>
<div class="t" style="left:306.56px;top:343px;color:#000;font-size:12px;transform:scaleX(0.9499);">Dev. Ref.</div>
<div class="btn" style="left:370px;top:339px;width:47px;height:20px;"></div>
<svg style="left:374px;top:341px" width="14" height="15" viewBox="0 0 14 15"><rect x="0.5" y="0.5" width="13" height="2" fill="#4aa84a" stroke="#2c7a2c" stroke-width="1"/><path d="M1.5 1.5 H12.5" stroke="#8ad87a" stroke-width="1"/><rect x="0.5" y="4.5" width="13" height="2" fill="#4aa84a" stroke="#2c7a2c" stroke-width="1"/><path d="M1.5 5.5 H12.5" stroke="#8ad87a" stroke-width="1"/><rect x="0.5" y="8.5" width="13" height="2" fill="#4aa84a" stroke="#2c7a2c" stroke-width="1"/><path d="M1.5 9.5 H12.5" stroke="#8ad87a" stroke-width="1"/><rect x="0.5" y="12.5" width="13" height="2" fill="#4aa84a" stroke="#2c7a2c" stroke-width="1"/><path d="M1.5 13.5 H12.5" stroke="#8ad87a" stroke-width="1"/></svg>
<div class="t" style="left:393.88px;top:343px;color:#000;font-size:12px;transform:scaleX(0.9225);">Ret.</div>
<div class="btn" style="left:424px;top:339px;width:50px;height:20px;"></div>
<svg style="left:425px;top:341px" width="14" height="15" viewBox="0 0 14 15"><rect x="0.5" y="0.5" width="13" height="2" fill="#4aa84a" stroke="#2c7a2c" stroke-width="1"/><path d="M1.5 1.5 H12.5" stroke="#8ad87a" stroke-width="1"/><rect x="0.5" y="4.5" width="13" height="2" fill="#4aa84a" stroke="#2c7a2c" stroke-width="1"/><path d="M1.5 5.5 H12.5" stroke="#8ad87a" stroke-width="1"/><rect x="0.5" y="8.5" width="13" height="2" fill="#4aa84a" stroke="#2c7a2c" stroke-width="1"/><path d="M1.5 9.5 H12.5" stroke="#8ad87a" stroke-width="1"/><rect x="0.5" y="12.5" width="13" height="2" fill="#4aa84a" stroke="#2c7a2c" stroke-width="1"/><path d="M1.5 13.5 H12.5" stroke="#8ad87a" stroke-width="1"/></svg>
<div class="bx" style="left:424px;top:340px;width:51px;height:18px;overflow:hidden">
<div class="t" style="left:20.83px;top:3px;color:#000;font-size:12px;transform:scaleX(0.8680);">Emprestimo</div>
</div>
<div class="btn" style="left:481px;top:339px;width:47px;height:20px;"></div>
<svg style="left:485px;top:341px" width="14" height="15" viewBox="0 0 14 15"><rect x="0.5" y="0.5" width="13" height="2" fill="#4aa84a" stroke="#2c7a2c" stroke-width="1"/><path d="M1.5 1.5 H12.5" stroke="#8ad87a" stroke-width="1"/><rect x="0.5" y="4.5" width="13" height="2" fill="#4aa84a" stroke="#2c7a2c" stroke-width="1"/><path d="M1.5 5.5 H12.5" stroke="#8ad87a" stroke-width="1"/><rect x="0.5" y="8.5" width="13" height="2" fill="#4aa84a" stroke="#2c7a2c" stroke-width="1"/><path d="M1.5 9.5 H12.5" stroke="#8ad87a" stroke-width="1"/><rect x="0.5" y="12.5" width="13" height="2" fill="#4aa84a" stroke="#2c7a2c" stroke-width="1"/><path d="M1.5 13.5 H12.5" stroke="#8ad87a" stroke-width="1"/></svg>
<div class="t" style="left:504.27px;top:343px;color:#000;font-size:12px;transform:scaleX(0.9173);">SFP</div>
<div class="t" style="left:583.07px;top:342px;color:#0000ff;font-size:12px;font-weight:bold;transform:scaleX(1.0129);">0&nbsp;&nbsp;Itens</div>
<div class="t" style="left:635.75px;top:332px;color:#008000;font-size:12px;font-weight:bold;transform:scaleX(0.9703);">Produto:</div>
<div class="t" style="left:691.04px;top:332px;color:#008000;font-size:12px;font-weight:bold;transform:scaleX(1.0701);">0,00</div>
<div class="t" style="left:651.92px;top:347px;color:#008000;font-size:12px;font-weight:bold;transform:scaleX(1.0175);">Nota:</div>
<div class="t" style="left:691.04px;top:347px;color:#008000;font-size:12px;font-weight:bold;transform:scaleX(1.0701);">0,00</div>
<div class="gb" style="left:810px;top:331px;width:145px;height:29px;border-color:#e3e3e3"></div>
<div class="bx" style="left:888px;top:329px;width:26px;height:5px;background:#e1e1e1;border:1px solid #adadad;border-top:none"></div>
<div class="t" style="left:814.31px;top:343px;color:#ff0000;font-size:12px;font-weight:bold;transform:scaleX(0.9832);">Avulsa</div>
<svg style="left:865px;top:340px" width="15" height="15" viewBox="0 0 15 15"><path d="M5.5 0.5 H9.5 V5.5 H14.5 V9.5 H9.5 V14.5 H5.5 V9.5 H0.5 V5.5 H5.5Z" fill="#68c058" stroke="#2e8a2e" stroke-width="1"/></svg>
<svg style="left:894px;top:345px" width="16" height="6" viewBox="0 0 16 6"><rect x="0.5" y="0.5" width="14" height="4.5" rx="1.5" fill="#e85030" stroke="#a03010" stroke-width="1"/><path d="M2 2.2 H13" stroke="#ff9070" stroke-width="1"/></svg>
<svg style="left:923px;top:340px" width="17" height="16" viewBox="0 0 17 16"><path d="M5.5 0.5 H13 L16.5 4 V15.5 H5.5Z" fill="#fff" stroke="#000"/><path d="M8 6 H15 M8 8.5 H15 M8 11 H15 M8 13.5 H15" stroke="#000" stroke-width=".7" stroke-dasharray="1 1"/><path d="M2 8 L5 7 L8 8 L10 9 L8 10 L9 12 L7 14 L2.5 14Z" fill="#f8f060" stroke="#000" stroke-width=".9"/><rect x="0" y="8" width="2" height="6" fill="#30d0f0" stroke="#000" stroke-width=".5"/><path d="M3.5 0.5 L10 8" stroke="#d02020" stroke-width="1.4"/><path d="M3.5 0.5 L5 2.3" stroke="#000" stroke-width="1.4"/></svg>
<div class="bx" style="left:963px;top:329px;width:21px;height:7px;background:#e1e1e1;border:1px solid #adadad;border-top:none"></div>
<div class="btn" style="left:963px;top:339px;width:21px;height:19px;"></div>
<svg style="left:966px;top:342px" width="15" height="13" viewBox="0 0 15 13"><rect x="0.5" y="0.5" width="14" height="12" fill="#f8f8f8" stroke="#404040"/><rect x="1" y="1" width="13" height="2" fill="#505050"/><path d="M1 5.5 H14 M1 8 H14 M1 10.5 H14" stroke="#707070" stroke-width="1"/><rect x="9" y="4" width="5" height="2" fill="#30b040"/><rect x="9" y="6" width="5" height="1.5" fill="#3070d0"/></svg>
<div class="btn" style="left:18px;top:361px;width:21px;height:20px;"></div>
<svg style="left:21px;top:365px" width="15" height="13" viewBox="0 0 15 13"><rect x="0.5" y="0.5" width="14" height="12" fill="#fff" stroke="#303030"/><rect x="1" y="1" width="13" height="2.5" fill="#3a90e8"/><path d="M1 6.5 H14 M1 9.5 H14 M5.5 3.5 V12.5 M10 3.5 V12.5" stroke="#909090" stroke-width=".8"/><path d="M8 0 L2 6.5 L5.5 6.5 L2.5 12.5 L10 5 L6.5 5 L9 0Z" fill="#ffd000" stroke="#e07000" stroke-width=".6"/></svg>
<div class="btn" style="left:18px;top:386px;width:21px;height:19px;"></div>
<div class="t" style="left:21.80px;top:389px;color:#000;font-size:12px;transform:scaleX(0.9068);">NF</div>
<div class="btn" style="left:18px;top:410px;width:21px;height:19px;"></div>
<div class="t" style="left:25.69px;top:413px;color:#000;font-size:12px;transform:scaleX(1.0000);">!</div>
<div class="btn" style="left:18px;top:431px;width:21px;height:15px;"></div>
<div class="t" style="left:23.64px;top:433px;color:#000;font-size:12px;transform:scaleX(0.9462);">!!!</div>
<div class="btn" style="left:18px;top:453px;width:21px;height:19px;"></div>
<div class="t" style="left:26.41px;top:456px;color:#000;font-size:12px;transform:scaleX(0.8884);">$</div>
<div class="btn" style="left:18px;top:478px;width:21px;height:19px;"></div>
<div class="t" style="left:25.03px;top:481px;color:#000;font-size:12px;transform:scaleX(0.8732);">D</div>
<div class="btn" style="left:18px;top:506px;width:21px;height:18px;"></div>
<svg style="left:21px;top:510px" width="14" height="12" viewBox="0 0 14 12" shape-rendering="crispEdges"><path d="M0 0.5 H14 M0 2.5 H14 M0 4.5 H14 M0 6.5 H14 M0 8.5 H14 M0 10.5 H14" stroke="#3c4278" stroke-width="1"/></svg>
<div class="btn" style="left:18px;top:530px;width:21px;height:19px;"></div>
<svg style="left:20px;top:531px" width="17" height="17" viewBox="0 0 17 17"><circle cx="8.5" cy="8.5" r="8" fill="#22a022"/><circle cx="8.5" cy="6" r="5" fill="#60d060" opacity=".6"/><path d="M8.5 3 L4 8 H7 V13 H10 V8 H13Z" fill="#fff"/></svg>
<div class="btn" style="left:18px;top:554px;width:21px;height:19px;"></div>
<svg style="left:20px;top:555px" width="17" height="17" viewBox="0 0 17 17"><circle cx="8.5" cy="8.5" r="8" fill="#1060d0"/><circle cx="8.5" cy="6" r="5" fill="#60a0f0" opacity=".6"/><path d="M8.5 14 L4 9 H7 V4 H10 V9 H13Z" fill="#fff"/></svg>
<div class="t" style="left:19.90px;top:581px;color:#000;font-size:12px;font-weight:bold;transform:scaleX(1.1751);">F9</div>
<div class="btn" style="left:18px;top:604px;width:21px;height:19px;"></div>
<div class="t" style="left:26.09px;top:607px;color:#000;font-size:12px;transform:scaleX(0.9986);">?</div>
<div class="btn" style="left:18px;top:631px;width:21px;height:21px;"></div>
<svg style="left:21px;top:634px" width="16" height="15" viewBox="0 0 16 15"><path d="M1.5 1.5 L12 12 M14 1.5 L3 11.5" stroke="#000" stroke-width="3"/><path d="M2.5 1.5 L12 11" stroke="#20e0f0" stroke-width="1.4"/><path d="M9 3 L13 1" stroke="#fff" stroke-width=".8"/><rect x="2" y="11" width="13" height="3" fill="#000"/><rect x="10" y="12" width="5" height="1.5" fill="#20d0e0"/></svg>
<div class="btn" style="left:18px;top:661px;width:21px;height:20px;"></div>
<div class="t" style="left:22.71px;top:665px;color:#000;font-size:12px;transform:scaleX(0.8872);">TC</div>
<div class="btn" style="left:18px;top:686px;width:21px;height:20px;"></div>
<div class="t" style="left:16.59px;top:690px;color:#0000ff;font-size:12px;font-weight:bold;transform:scaleX(0.9310);">XML</div>
<div class="bx" style="left:41px;top:362px;width:944px;height:346px;background:#fff;border:1px solid #a0a0a0"></div>
<div class="bx" style="left:43px;top:365px;width:12px;height:16px;border-right:1px solid #e3e3e3;border-bottom:1px solid #e3e3e3"></div>
<div class="bx" style="left:55px;top:365px;width:27px;height:16px;background:#f0f0f0;border-right:1px solid #a0a0a0;border-bottom:1px solid #a0a0a0;border-left:1px solid #fff;border-top:1px solid #fff"></div>
<div class="bx" style="left:83px;top:365px;width:90px;height:16px;background:#f0f0f0;border-right:1px solid #a0a0a0;border-bottom:1px solid #a0a0a0;border-left:1px solid #fff;border-top:1px solid #fff"></div>
<div class="bx" style="left:174px;top:365px;width:288px;height:16px;background:#f0f0f0;border-right:1px solid #a0a0a0;border-bottom:1px solid #a0a0a0;border-left:1px solid #fff;border-top:1px solid #fff"></div>
<div class="bx" style="left:463px;top:365px;width:29px;height:16px;background:#f0f0f0;border-right:1px solid #a0a0a0;border-bottom:1px solid #a0a0a0;border-left:1px solid #fff;border-top:1px solid #fff"></div>
<div class="bx" style="left:494px;top:365px;width:84px;height:16px;background:#f0f0f0;border-right:1px solid #a0a0a0;border-bottom:1px solid #a0a0a0;border-left:1px solid #fff;border-top:1px solid #fff"></div>
<div class="bx" style="left:579px;top:365px;width:42px;height:16px;background:#f0f0f0;border-right:1px solid #a0a0a0;border-bottom:1px solid #a0a0a0;border-left:1px solid #fff;border-top:1px solid #fff"></div>
<div class="bx" style="left:622px;top:365px;width:44px;height:16px;background:#f0f0f0;border-right:1px solid #a0a0a0;border-bottom:1px solid #a0a0a0;border-left:1px solid #fff;border-top:1px solid #fff"></div>
<div class="bx" style="left:667px;top:365px;width:53px;height:16px;background:#f0f0f0;border-right:1px solid #a0a0a0;border-bottom:1px solid #a0a0a0;border-left:1px solid #fff;border-top:1px solid #fff"></div>
<div class="bx" style="left:721px;top:365px;width:49px;height:16px;background:#f0f0f0;border-right:1px solid #a0a0a0;border-bottom:1px solid #a0a0a0;border-left:1px solid #fff;border-top:1px solid #fff"></div>
<div class="bx" style="left:771px;top:365px;width:63px;height:16px;background:#f0f0f0;border-right:1px solid #a0a0a0;border-bottom:1px solid #a0a0a0;border-left:1px solid #fff;border-top:1px solid #fff"></div>
<div class="bx" style="left:835px;top:365px;width:53px;height:16px;background:#f0f0f0;border-right:1px solid #a0a0a0;border-bottom:1px solid #a0a0a0;border-left:1px solid #fff;border-top:1px solid #fff"></div>
<div class="bx" style="left:889px;top:365px;width:21px;height:16px;background:#f0f0f0;border-right:1px solid #a0a0a0;border-bottom:1px solid #a0a0a0;border-left:1px solid #fff;border-top:1px solid #fff"></div>
<div class="bx" style="left:911px;top:365px;width:35px;height:16px;background:#f0f0f0;border-right:1px solid #a0a0a0;border-bottom:1px solid #a0a0a0;border-left:1px solid #fff;border-top:1px solid #fff"></div>
<div class="bx" style="left:947px;top:365px;width:20px;height:16px;background:#f0f0f0;border-right:1px solid #a0a0a0;border-bottom:1px solid #a0a0a0;border-left:1px solid #fff;border-top:1px solid #fff"></div>
<div class="bx" style="left:43px;top:365px;width:924px;height:16px;overflow:hidden">
<div class="bx" style="left:12px;top:0;width:25px;height:16px;overflow:hidden">
<div class="t" style="left:2.65px;top:1px;color:#000;font-size:12px;transform:scaleX(0.9000);">Or...</div>
</div>
<div class="bx" style="left:40px;top:0;width:88px;height:16px;overflow:hidden">
<div class="t" style="left:2.61px;top:1px;color:#000;font-size:12px;transform:scaleX(0.9000);">Codigo</div>
</div>
<div class="bx" style="left:131px;top:0;width:286px;height:16px;overflow:hidden">
<div class="t" style="left:2.40px;top:1px;color:#000;font-size:12px;transform:scaleX(0.9000);">Produto</div>
</div>
<div class="bx" style="left:420px;top:0;width:27px;height:16px;overflow:hidden">
<div class="t" style="left:2.43px;top:1px;color:#000;font-size:12px;transform:scaleX(0.9000);">Uni...</div>
</div>
<div class="bx" style="left:451px;top:0;width:82px;height:16px;overflow:hidden">
<div class="t" style="left:2.40px;top:1px;color:#000;font-size:12px;transform:scaleX(0.9000);">Lote</div>
</div>
<div class="bx" style="left:536px;top:0;width:40px;height:16px;overflow:hidden">
<div class="t" style="left:2.61px;top:1px;color:#000;font-size:12px;transform:scaleX(0.9000);">CFOP</div>
</div>
<div class="bx" style="left:579px;top:0;width:42px;height:16px;overflow:hidden">
<div class="t" style="left:2.65px;top:1px;color:#000;font-size:12px;transform:scaleX(0.9000);">Qtdade</div>
</div>
<div class="bx" style="left:624px;top:0;width:51px;height:16px;overflow:hidden">
<div class="t" style="left:2.91px;top:1px;color:#000;font-size:12px;transform:scaleX(0.9000);">Valor</div>
</div>
<div class="bx" style="left:678px;top:0;width:47px;height:16px;overflow:hidden">
<div class="t" style="left:2.40px;top:1px;color:#000;font-size:12px;transform:scaleX(0.9000);">Desconto</div>
</div>
<div class="bx" style="left:728px;top:0;width:61px;height:16px;overflow:hidden">
<div class="t" style="left:2.48px;top:1px;color:#000;font-size:12px;transform:scaleX(0.9000);">SubTotal</div>
</div>
<div class="bx" style="left:792px;top:0;width:51px;height:16px;overflow:hidden">
<div class="t" style="left:2.61px;top:1px;color:#000;font-size:12px;transform:scaleX(0.9000);">Codigo_...</div>
</div>
<div class="bx" style="left:846px;top:0;width:19px;height:16px;overflow:hidden">
<div class="t" style="left:2.65px;top:1px;color:#000;font-size:12px;transform:scaleX(0.9000);">O...</div>
</div>
<div class="bx" style="left:868px;top:0;width:33px;height:16px;overflow:hidden">
<div class="t" style="left:2.61px;top:1px;color:#000;font-size:12px;transform:scaleX(0.9000);">CST</div>
</div>
<div class="bx" style="left:904px;top:0;width:18px;height:16px;overflow:hidden">
<div class="t" style="left:2.36px;top:1px;color:#000;font-size:12px;transform:scaleX(0.9000);">ICMS</div>
</div>
</div>
<div class="bx" style="left:43px;top:381px;width:12px;height:19px;border-right:1px solid #e8e8e8;border-bottom:1px solid #e8e8e8"></div>
<div class="bx" style="left:55px;top:381px;width:27px;height:19px;border-right:1px solid #e8e8e8;border-bottom:1px solid #e8e8e8"></div>
<div class="bx" style="left:83px;top:381px;width:90px;height:19px;border-right:1px solid #e8e8e8;border-bottom:1px solid #e8e8e8"></div>
<div class="bx" style="left:174px;top:381px;width:288px;height:19px;border-right:1px solid #e8e8e8;border-bottom:1px solid #e8e8e8"></div>
<div class="bx" style="left:463px;top:381px;width:29px;height:19px;border-right:1px solid #e8e8e8;border-bottom:1px solid #e8e8e8"></div>
<div class="bx" style="left:494px;top:381px;width:84px;height:19px;border-right:1px solid #e8e8e8;border-bottom:1px solid #e8e8e8"></div>
<div class="bx" style="left:579px;top:381px;width:42px;height:19px;border-right:1px solid #e8e8e8;border-bottom:1px solid #e8e8e8"></div>
<div class="bx" style="left:622px;top:381px;width:44px;height:19px;border-right:1px solid #e8e8e8;border-bottom:1px solid #e8e8e8"></div>
<div class="bx" style="left:667px;top:381px;width:53px;height:19px;border-right:1px solid #e8e8e8;border-bottom:1px solid #e8e8e8"></div>
<div class="bx" style="left:721px;top:381px;width:49px;height:19px;border-right:1px solid #e8e8e8;border-bottom:1px solid #e8e8e8"></div>
<div class="bx" style="left:771px;top:381px;width:63px;height:19px;border-right:1px solid #e8e8e8;border-bottom:1px solid #e8e8e8"></div>
<div class="bx" style="left:835px;top:381px;width:53px;height:19px;border-right:1px solid #e8e8e8;border-bottom:1px solid #e8e8e8"></div>
<div class="bx" style="left:889px;top:381px;width:21px;height:19px;border-right:1px solid #e8e8e8;border-bottom:1px solid #e8e8e8"></div>
<div class="bx" style="left:911px;top:381px;width:35px;height:19px;border-right:1px solid #e8e8e8;border-bottom:1px solid #e8e8e8"></div>
<div class="bx" style="left:947px;top:381px;width:20px;height:19px;border-right:1px solid #e8e8e8;border-bottom:1px solid #e8e8e8"></div>
<svg style="left:46px;top:385px" width="7" height="11" viewBox="0 0 7 11"><path d="M0 0 L6 5.5 L0 11Z" fill="#000"/></svg>
<div class="bx" style="left:967px;top:363px;width:17px;height:327px;background:#f0f0f0"></div>
<svg style="left:970px;top:370px" width="9" height="6" viewBox="0 0 9 6"><path d="M1 5 L4.5 1.5 L8 5" fill="none" stroke="#505050" stroke-width="2.2"/></svg>
<div class="bx" style="left:967px;top:381px;width:15px;height:17px;background:#cdcdcd"></div>
<svg style="left:970px;top:678px" width="9" height="6" viewBox="0 0 9 6"><path d="M1 1 L4.5 4.5 L8 1" fill="none" stroke="#505050" stroke-width="2.2"/></svg>
<div class="bx" style="left:43px;top:690px;width:924px;height:16px;background:#f0f0f0"></div>
<svg style="left:47px;top:694px" width="8" height="8" viewBox="0 0 8 8"><path d="M6 0.5 L2 4 L6 7.5" fill="none" stroke="#505050" stroke-width="2.2"/></svg>
<div class="bx" style="left:60px;top:690px;width:17px;height:15px;background:#cdcdcd"></div>
<svg style="left:954px;top:694px" width="8" height="8" viewBox="0 0 8 8"><path d="M2 0.5 L6 4 L2 7.5" fill="none" stroke="#505050" stroke-width="2.2"/></svg>
<div class="bx" style="left:967px;top:690px;width:17px;height:16px;background:#f0f0f0"></div>
</body></html>
